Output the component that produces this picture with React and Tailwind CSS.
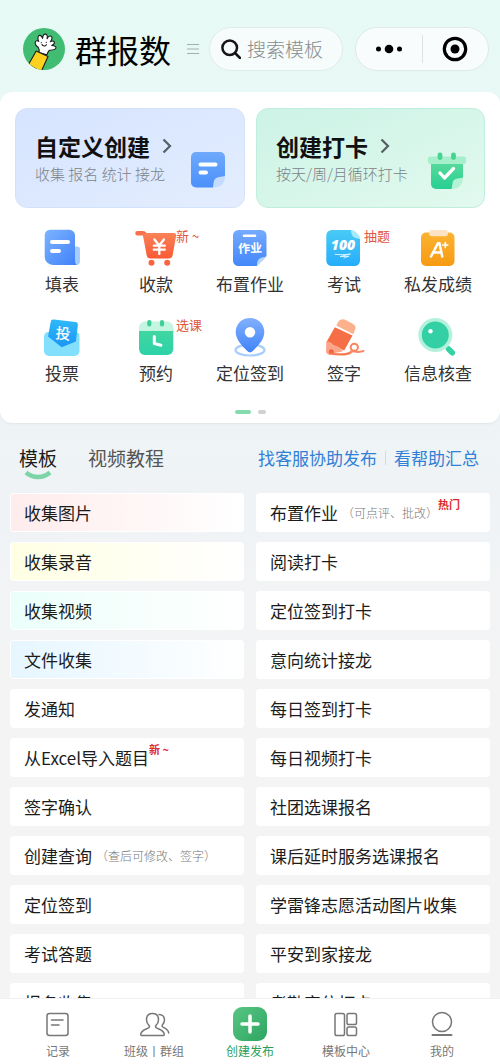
const FONT = "font-['Noto_Sans_CJK_SC','Noto_Sans',sans-serif]";

function Logo() {
  return (
    <svg viewBox="0 0 42 42" className="size-[42px] shrink-0" aria-hidden="true">
      <defs>
        <clipPath id="logoClip">
          <circle cx="21" cy="21" r="21" />
        </clipPath>
      </defs>
      <circle cx="21" cy="21" r="21" fill="#41bd73" />
      <g clipPath="url(#logoClip)" stroke="#1c1c1c" strokeWidth="1.1" strokeLinejoin="round" strokeLinecap="round">
        <path
          d="M16 24.5c.6-2 .3-3.300-.8-5.200-1.700-1-3.200-3-3-5 .3-1.800 2.300-2 3.600-.9-1.300-2.400-1.200-5.600.6-6 1.700-.4 2.600 1.200 3.200 3 .2-2.300 1.100-4.500 2.900-4.300 1.900.2 2 2.400 1.600 4.600 1-1.800 2.500-3.200 4-2.400 1.700 1 .8 3.200-.7 5.400 1.300-.8 3.200-1.100 3.900.3.700 1.500-1 2.700-2.600 3.500 1.800-.1 4.300.5 4.300 2.200-.1 2.200-4.200 2.300-6.800 2.600-1 1.200-1.800 2.700-2.400 4.500z"
          fill="#fff"
        />
        <path d="M13.200 23 25 28.400 18 44 5.500 36.500z" fill="#fdd11d" />
        <path d="M19 16.500c.8 1.800 3.300 2 4.400.2" fill="none" />
        <path d="M18.300 14.600v.1M23.300 14.300v.1" fill="none" />
      </g>
    </svg>
  );
}

function SheetIcon() {
  return (
    <svg viewBox="0 0 40 40" className="size-10" aria-hidden="true">
      <defs>
        <linearGradient id="sheetG" x1="0" y1="0" x2="1" y2="1">
          <stop stopColor="#7db4ff" />
          <stop offset="1" stopColor="#3f80f8" />
        </linearGradient>
      </defs>
      <path d="M27 18.500h8a3 3 0 0 1 3 3V33a4 4 0 0 1-4 4h-7z" fill="#a5ccff" />
      <path d="M8 1.800h19.500a5.500 5.500 0 0 1 5.500 5.500V32c0 2.500.8 4.300 2 5H11a8.300 8.300 0 0 1-8.300-8.300V7A5.300 5.300 0 0 1 8 1.800z" fill="url(#sheetG)" />
      <path d="M10 14h16M10 23h7" stroke="#fff" strokeWidth="4" strokeLinecap="round" />
    </svg>
  );
}

function CartIcon() {
  return (
    <svg viewBox="0 0 40 40" className="size-10 overflow-visible" aria-hidden="true">
      <defs>
        <linearGradient id="cartG" x1="0" y1="0" x2="0" y2="1">
          <stop stopColor="#f98258" />
          <stop offset="1" stopColor="#fa5a35" />
        </linearGradient>
      </defs>
      <path d="M1.500 5.300h5c1.800 0 2.400.8 2.800 2.500" stroke="#f9714a" strokeWidth="4.500" strokeLinecap="round" fill="none" />
      <path d="M6.500 5h31.200a2.400 2.400 0 0 1 2.400 2.900l-3.400 19a4.200 4.200 0 0 1-4.100 3.500H14.800a4.200 4.200 0 0 1-4.200-3.500z" fill="url(#cartG)" />
      <circle cx="15.500" cy="34.700" r="3" fill="#fa6440" />
      <circle cx="31.200" cy="34.700" r="3" fill="#fa6440" />
      <path d="m18.500 11.500 4.700 6 4.700-6M17.800 17.700h11M17.800 21.700h11M23.300 17.700v8.300" stroke="#fff" strokeWidth="2.300" fill="none" strokeLinecap="round" />
    </svg>
  );
}

function HomeworkIcon() {
  return (
    <svg viewBox="0 0 40 40" className="size-10" aria-hidden="true">
      <defs>
        <linearGradient id="hwG" x1="0" y1="0" x2="0" y2="1">
          <stop stopColor="#75aaff" />
          <stop offset="1" stopColor="#4387f9" />
        </linearGradient>
      </defs>
      <path d="M8.500 2H31a5.500 5.500 0 0 1 5.500 5.500V28l-10 10h-18A5.500 5.500 0 0 1 3 32.500v-25A5.500 5.500 0 0 1 8.500 2z" fill="url(#hwG)" />
      <path d="M36.500 28.500 27 38c0-3 .3-5 1.500-6.500 1.700-2 5-2.500 8-3z" fill="#b4d4ff" />
      <path d="M14 7.700h11" stroke="#fff" strokeWidth="2.600" strokeLinecap="round" />
      <text x="20" y="24.500" fontSize="12" fontWeight="700" fill="#fff" textAnchor="middle" transform="rotate(-2 20 20)">作业</text>
    </svg>
  );
}

function ExamIcon() {
  return (
    <svg viewBox="0 0 40 40" className="size-10" aria-hidden="true">
      <defs>
        <linearGradient id="examG" x1="0" y1="0" x2="0" y2="1">
          <stop stopColor="#49cbf5" />
          <stop offset="1" stopColor="#25adfb" />
        </linearGradient>
      </defs>
      <path d="M7.800 2H27l9 9v21.500a5.500 5.500 0 0 1-5.500 5.500H7.800a5.500 5.500 0 0 1-5.500-5.500v-25A5.500 5.500 0 0 1 7.800 2z" fill="url(#examG)" />
      <path d="M27 2c.2 3 .6 5 2 6.600 1.800 1.800 4.500 2 7 2.400 0-2-.8-3.600-2.300-5.200S30 2 27 2z" fill="#a8e9fc" />
      <text x="19" y="21.500" fontSize="14" fontWeight="800" fontStyle="italic" fill="#fff" textAnchor="middle" fontFamily="Open Sans, sans-serif">100</text>
      <path d="M11 26.300c6 .8 10 .3 15.500-.3-4 1-7 1.600-10.500 2.600 3 0 6-.3 9-.3-2.500.6-4 1-5 1.900" stroke="#d5f4ff" strokeWidth="1" fill="none" strokeLinecap="round" />
    </svg>
  );
}

function GradeIcon() {
  return (
    <svg viewBox="0 0 40 40" className="size-10" aria-hidden="true">
      <defs>
        <linearGradient id="gradeG" x1="0" y1="0" x2="0" y2="1">
          <stop stopColor="#fcb331" />
          <stop offset="1" stopColor="#f79a12" />
        </linearGradient>
      </defs>
      <rect x="3" y="4.500" width="33.500" height="33.500" rx="5" fill="url(#gradeG)" />
      <rect x="11" y="2" width="19" height="6.300" rx="3" fill="#fde3c4" />
      <path d="m13 28.500 7-13.300h1.500l2.700 13.300M16 24.500h7.500" stroke="#fff" strokeWidth="2.500" fill="none" strokeLinecap="round" strokeLinejoin="round" />
      <path d="M27.300 14.500v5M24.800 17h5" stroke="#fff" strokeWidth="1.700" strokeLinecap="round" />
    </svg>
  );
}

function VoteIcon() {
  return (
    <svg viewBox="0 0 40 40" className="size-10" aria-hidden="true">
      <defs>
        <linearGradient id="voteG" x1="0" y1="0" x2="0" y2="1">
          <stop stopColor="#2fb9f8" />
          <stop offset="1" stopColor="#1b95f7" />
        </linearGradient>
      </defs>
      <path d="M6 15h28a4 4 0 0 1 3.500 4v15a5 5 0 0 1-5 5H7a5 5 0 0 1-5-5V20a5 5 0 0 1 4-5z" fill="#83e0fc" />
      <path d="M11.800 2.600 33.500 5a2.700 2.700 0 0 1 2.400 3l-2 16.500-14.200 5.800L6 19.500 8.700 5a2.700 2.700 0 0 1 3.100-2.400z" fill="url(#voteG)" />
      <text x="21" y="22" fontSize="15" fontWeight="500" fill="#fff" textAnchor="middle" transform="rotate(6 20 16)">投</text>
    </svg>
  );
}

function BookingIcon() {
  return (
    <svg viewBox="0 0 40 40" className="size-10" aria-hidden="true">
      <defs>
        <linearGradient id="bookG" x1="0" y1="0" x2="0" y2="1">
          <stop stopColor="#43d6a0" />
          <stop offset="1" stopColor="#2bd3a8" />
        </linearGradient>
      </defs>
      <path d="M3 12h34.300v20a6 6 0 0 1-6 6H9a6 6 0 0 1-6-6z" fill="url(#bookG)" />
      <path d="M9 4.500h22.300a6 6 0 0 1 6 6V14H3v-3.500a6 6 0 0 1 6-6z" fill="#c4f5e1" />
      <path d="M13.300 5v2.500M26 5v2.500" stroke="#3ecf98" strokeWidth="4.200" strokeLinecap="round" />
      <path d="M18.300 19.500v7l6.700 1.700" stroke="#fff" strokeWidth="3" fill="none" strokeLinecap="round" strokeLinejoin="round" />
    </svg>
  );
}

function PinIcon() {
  return (
    <svg viewBox="0 0 40 40" className="size-10" aria-hidden="true">
      <defs>
        <linearGradient id="pinG" x1="0" y1="0" x2="0" y2="1">
          <stop stopColor="#82b0fd" />
          <stop offset="1" stopColor="#3f83f8" />
        </linearGradient>
      </defs>
      <ellipse cx="20" cy="33" rx="14.500" ry="5.500" fill="none" stroke="#a9cdfd" strokeWidth="2.200" />
      <path d="M20 1c8.200 0 14.300 6.200 14.300 14 0 7.500-6 13.500-11.800 19.300a3.400 3.400 0 0 1-5 0C11.700 28.500 5.700 22.500 5.700 15 5.700 7.200 11.800 1 20 1z" fill="url(#pinG)" />
      <circle cx="20" cy="15.300" r="5.200" fill="#fff" />
    </svg>
  );
}

function PencilIcon() {
  return (
    <svg viewBox="0 0 40 40" className="size-10 overflow-visible" aria-hidden="true">
      <path d="M14.300 4.800a4.800 4.800 0 0 1 6.300-2.200l8.200 4.200a4.800 4.800 0 0 1 2.200 6.200l-1.800 4.200L12.300 8.500z" fill="#fbb28c" />
      <path d="m10.800 10.200 17.700 8.300-8.300 15L2.500 25z" fill="#f66e46" />
      <path d="M2.300 24.500c4 .2 6.200 1.500 7.200 4.200 3.500-.3 6 .8 9.500 5.500L5.500 37.300A3 3 0 0 1 2 34.600z" fill="#fba58b" />
      <path d="M4.800 34a2.600 2.600 0 1 1 3 3.300L5 37.500z" fill="#f2623c" />
      <path d="M6 36.500c9 1.300 17 1.300 20.500-1" stroke="#f8774f" strokeWidth="2.200" fill="none" strokeLinecap="round" />
      <path d="M26.500 35.500c2-1 4-2.300 3.800-2M27.500 33.300c3 2.300 7 2 12 .7" stroke="#fa8a68" strokeWidth="2" fill="none" strokeLinecap="round" />
      <circle cx="30.300" cy="30.300" r="3.600" stroke="#fa8460" strokeWidth="2" fill="none" />
    </svg>
  );
}

function CheckInfoIcon() {
  return (
    <svg viewBox="0 0 40 40" className="size-10" aria-hidden="true">
      <path d="m30.500 32 3.800 3.800" stroke="#35d2a4" strokeWidth="5.500" strokeLinecap="round" />
      <circle cx="17.300" cy="18" r="17" fill="#b4f1dd" />
      <circle cx="17.300" cy="18" r="13.500" fill="#33cfa5" />
      <circle cx="12.500" cy="14.300" r="2.200" fill="#fff" />
    </svg>
  );
}

function NoteIcon() {
  return (
    <svg viewBox="0 0 36 36" className="size-9" aria-hidden="true">
      <defs>
        <linearGradient id="noteG" x1="0" y1="0" x2="0" y2="1">
          <stop stopColor="#6ea9fb" />
          <stop offset="1" stopColor="#4b90fa" />
        </linearGradient>
      </defs>
      <path d="M6 0h24a5 5 0 0 1 5 5v19L23 35.500H6a5 5 0 0 1-5-5V5a5 5 0 0 1 5-5z" fill="url(#noteG)" />
      <path d="M35 24c0 8-4.500 11.500-12 11.500.5-3 .3-6.500 2-8.500 2-2.200 6.500-2.200 10-3z" fill="#c3dcff" />
      <path d="M10.500 12.500h15M10.500 20.500h5.500" stroke="#fff" strokeWidth="4" strokeLinecap="round" />
    </svg>
  );
}

function ClockInIcon() {
  return (
    <svg viewBox="0 0 40 38" className="h-[38px] w-10" aria-hidden="true">
      <defs>
        <linearGradient id="clockG" x1="0" y1="0" x2="0" y2="1">
          <stop stopColor="#5bdb9b" />
          <stop offset="1" stopColor="#27cf93" />
        </linearGradient>
      </defs>
      <path d="M4 9h32v17.500L25.500 37H9a5 5 0 0 1-5-5z" fill="url(#clockG)" />
      <path d="M36 25.500c0 7-4 11.500-11.500 11.500 1-3 .5-7 2.500-9 2-1.700 5.500-1.500 9-2.500z" fill="#b5f2d5" />
      <rect x="1" y="4.500" width="38" height="7.500" rx="2" fill="#a5efcb" />
      <path d="M13 3v2.500M26.500 3v2.500" stroke="#45d38f" strokeWidth="4.800" strokeLinecap="round" />
      <path d="m13 21 4.500 5 9-9.500" stroke="#fff" strokeWidth="3.300" fill="none" strokeLinecap="round" strokeLinejoin="round" />
    </svg>
  );
}

const TOOLS = [
  { label: "填表", Icon: SheetIcon },
  { label: "收款", Icon: CartIcon, tag: "新 ~" },
  { label: "布置作业", Icon: HomeworkIcon },
  { label: "考试", Icon: ExamIcon, tag: "抽题" },
  { label: "私发成绩", Icon: GradeIcon },
  { label: "投票", Icon: VoteIcon },
  { label: "预约", Icon: BookingIcon, tag: "选课" },
  { label: "定位签到", Icon: PinIcon },
  { label: "签字", Icon: PencilIcon },
  { label: "信息核查", Icon: CheckInfoIcon },
];

const LEFT = [
  { name: "收集图片", bg: "from-[#ffecec]" },
  { name: "收集录音", bg: "from-[#ffffe3]" },
  { name: "收集视频", bg: "from-[#ebfffa]" },
  { name: "文件收集", bg: "from-[#e6f6ff]" },
  { name: "发通知" },
  { name: "从Excel导入题目", tag: "新 ~" },
  { name: "签字确认" },
  { name: "创建查询", note: "（查后可修改、签字）" },
  { name: "定位签到" },
  { name: "考试答题" },
  { name: "报名收集" },
];

const RIGHT = [
  { name: "布置作业", note: "（可点评、批改）", tag: "热门" },
  { name: "阅读打卡" },
  { name: "定位签到打卡" },
  { name: "意向统计接龙" },
  { name: "每日签到打卡" },
  { name: "每日视频打卡" },
  { name: "社团选课报名" },
  { name: "课后延时服务选课报名" },
  { name: "学雷锋志愿活动图片收集" },
  { name: "平安到家接龙" },
  { name: "考勤定位打卡" },
];

function Header() {
  return (
    <header className="flex items-center pt-[27px] pr-[11px] pb-[21px] pl-[23px]">
      <Logo />
      <h1 className="ml-2.5 text-[32px] leading-[44px] font-normal whitespace-nowrap text-black">群报数</h1>
      <button type="button" aria-label="菜单" className="ml-4 shrink-0">
        <svg viewBox="0 0 12 12" className="size-3" aria-hidden="true">
          <path d="M0 1.500h12M0 6h12M0 10.500h12" stroke="#a3b0ac" strokeWidth="1.200" />
        </svg>
      </button>
      <label className="ml-2.5 flex h-11 min-w-0 flex-1 items-center gap-1.5 rounded-full border border-[#dfece9] bg-[#f6fbfb] pl-[11px]">
        <svg viewBox="0 0 20 20" className="size-5 shrink-0" fill="none" stroke="#151515" strokeWidth="2.500" strokeLinecap="round" aria-hidden="true">
          <circle cx="8.700" cy="8.700" r="7.300" />
          <path d="m14 14 5 5" />
        </svg>
        <input
          type="search"
          aria-label="搜索模板"
          placeholder="搜索模板"
          className="w-full min-w-0 bg-transparent text-[19px] font-light outline-none placeholder:text-[#858c8b]"
        />
      </label>
      <div className="ml-3 flex h-11 w-[134px] shrink-0 items-center rounded-full border border-[#dfeae8] bg-[#f8fcfc]">
        <button type="button" aria-label="更多" className="flex flex-1 justify-center">
          <svg viewBox="0 0 28 10" className="h-2.5 w-7" aria-hidden="true">
            <circle cx="3.500" cy="5" r="2.500" />
            <circle cx="14" cy="5" r="4.300" />
            <circle cx="24.500" cy="5" r="2.500" />
          </svg>
        </button>
        <span className="h-7 w-px bg-[#dde3e3]" />
        <button type="button" aria-label="关闭" className="flex flex-1 justify-center">
          <svg viewBox="0 0 26 26" className="size-[26px]" aria-hidden="true">
            <circle cx="13" cy="13" r="10.700" fill="none" stroke="#000" strokeWidth="3.200" />
            <circle cx="13" cy="13" r="4.500" />
          </svg>
        </button>
      </div>
    </header>
  );
}

function CreateCard({ title, desc, className, children }) {
  return (
    <button type="button" className={`flex h-[100px] flex-1 items-start justify-between rounded-xl border pt-[23px] pl-[19px] text-left ${className}`}>
      <span className="flex flex-col">
        <span className="flex items-center gap-3 text-[23px] leading-7 font-bold whitespace-nowrap text-[#111]">
          {title}
          <svg viewBox="0 0 10 16" className="h-4 w-2.5" fill="none" stroke="#555f66" strokeWidth="2.200" aria-hidden="true">
            <path d="m1.500 1.500 6.500 6.500-6.500 6.500" />
          </svg>
        </span>
        <span className="mt-0.5 text-[15px] leading-6 font-light whitespace-nowrap text-[#7c8287]">{desc}</span>
      </span>
      <span className="mt-5">{children}</span>
    </button>
  );
}

function Tool({ label, Icon, tag }) {
  return (
    <button type="button" className="relative flex flex-col items-center">
      <Icon />
      <span className="mt-1 text-[17px] leading-6 whitespace-nowrap text-[#333]">{label}</span>
      {tag && (
        <span className="absolute top-0 left-[calc(50%+20px)] text-[13px] leading-4 whitespace-nowrap text-[#e0553d]">{tag}</span>
      )}
    </button>
  );
}

function TemplateRow({ name, note, tag, bg }) {
  return (
    <li>
      <a
        href="#"
        className={`flex h-[39px] items-center rounded-[3px] border border-white pl-[13px] whitespace-nowrap text-[17px] text-[#1c1c1c] ${bg ? `bg-linear-to-r ${bg} to-white` : "bg-white"}`}
      >
        {name}
        {note && <span className="ml-1 text-[12px] font-light text-[#777]">{note}</span>}
        {tag && <span className="self-start pt-0.5 text-[11px] leading-4 font-bold text-[#dd2a2a]">{tag}</span>}
      </a>
    </li>
  );
}

function BottomNav() {
  const item = "flex flex-1 flex-col items-center gap-0.5 text-[12px] leading-4 whitespace-nowrap";
  return (
    <nav className="flex h-[66px] shrink-0 border-t border-[#f0f0f0] bg-white px-2.5 pt-2 text-[#777]">
      <a href="#" className={item}>
        <svg viewBox="0 0 34 34" className="size-[34px]" fill="none" stroke="#777" strokeWidth="1.500" strokeLinecap="round" aria-hidden="true">
          <rect x="6" y="6.500" width="21" height="22" rx="2.500" />
          <path d="M10.500 13h11.500M10.500 18h7.500" />
        </svg>
        <span>记录</span>
      </a>
      <a href="#" className={item}>
        <svg viewBox="0 0 34 34" className="size-[34px]" fill="none" stroke="#777" strokeWidth="1.500" strokeLinecap="round" strokeLinejoin="round" aria-hidden="true">
          <path d="M15.500 6.500c-4 0-6 2.800-6 6.200 0 2.500 1 4.300 2.500 5.700.8.900.5 1.900-.5 2.500C8 22.800 4 23.500 3.700 27.500c0 .6.300.9.900.9h21.800c.6 0 .9-.3.900-.9-.3-4-4.300-4.700-7.800-6.600-1-.6-1.300-1.600-.5-2.500 1.500-1.400 2.500-3.200 2.500-5.700 0-3.400-2-6.200-6-6.200z" />
          <path d="M22 7.500c3.500 0 5.500 2.500 5.500 5.500 0 2.300-1 3.600-2 4.800-.7.900-.4 1.700.5 2.300 2.500 1.500 5.500 2.400 5.700 5.900" />
        </svg>
        <span>班级丨群组</span>
      </a>
      <a href="#" className={`${item} text-[#27a05c]`}>
        <span className="flex size-[34px] items-center justify-center rounded-[9px] bg-linear-to-br from-[#58c684] to-[#2ba560]">
          <svg viewBox="0 0 20 20" className="size-5" stroke="#fff" strokeWidth="3.500" strokeLinecap="round" aria-hidden="true">
            <path d="M10 2v16M2 10h16" />
          </svg>
        </span>
        <span>创建发布</span>
      </a>
      <a href="#" className={item}>
        <svg viewBox="0 0 34 34" className="size-[34px]" fill="none" stroke="#777" strokeWidth="1.500" aria-hidden="true">
          <rect x="6" y="6.500" width="9.500" height="22" rx="1.800" />
          <rect x="18" y="6.500" width="9.500" height="11" rx="1.800" />
          <rect x="18" y="20" width="9.500" height="8.500" rx="1.800" />
        </svg>
        <span>模板中心</span>
      </a>
      <a href="#" className={item}>
        <svg viewBox="0 0 34 34" className="size-[34px]" fill="none" stroke="#777" strokeWidth="1.500" strokeLinecap="round" aria-hidden="true">
          <circle cx="17" cy="15" r="9.500" />
          <path d="M7.500 28h19" strokeWidth="2" />
        </svg>
        <span>我的</span>
      </a>
    </nav>
  );
}

export default function App() {
  return (
    <div className={`flex h-dvh flex-col overflow-hidden bg-linear-to-b from-[#e7faf5] via-[#eff3f6] via-45% to-[#f4f4f4] to-65% ${FONT}`}>
      <main className="min-h-0 flex-1 overflow-y-auto [scrollbar-width:none]">
        <Header />

        <section className="rounded-xl bg-white px-[15px] pt-4 pb-[9px] shadow-sm shadow-black/5">
          <div className="flex gap-[11px]">
            <CreateCard title="自定义创建" desc="收集 报名 统计 接龙" className="border-[#d3e2fb] bg-linear-to-br from-[#d6e4ff] to-[#e3edfe] pr-[18px]">
              <NoteIcon />
            </CreateCard>
            <CreateCard title="创建打卡" desc="按天/周/月循环打卡" className="border-[#bfeedd] bg-linear-to-br from-[#ccf3e6] to-[#e2f9ee] pr-[17px]">
              <ClockInIcon />
            </CreateCard>
          </div>

          <div className="mt-5 grid grid-cols-5 gap-y-[21px]">
            {TOOLS.map((tool) => (
              <Tool key={tool.label} {...tool} />
            ))}
          </div>

          {/* Pager */}
          <div className="mt-[25px] flex justify-center gap-[7px]">
            <span className="h-1 w-4 rounded-full bg-[#86dbae]" />
            <span className="h-1 w-2 rounded-full bg-[#d0d0d0]" />
          </div>
        </section>

        <div className="flex h-[70px] items-center justify-between pr-[21px] pl-[19px]">
          <div className="flex gap-[31px] text-[19px] leading-7">
            <button type="button" className="relative text-[#1c1c1c]">
              模板
              <svg viewBox="0 0 28 10" className="absolute top-[26px] left-[5px] h-2.5 w-7" aria-hidden="true">
                <path d="M2 2.500c7 6 17 6 24 0" stroke="#7dd4a6" strokeWidth="4.500" fill="none" />
              </svg>
            </button>
            <button type="button" className="text-[#555]">视频教程</button>
          </div>
          <div className="flex items-center text-[17px] text-[#3180d5]">
            <a href="#">找客服协助发布</a>
            <span className="mx-2 h-3.5 w-px bg-[#d5dade]" />
            <a href="#">看帮助汇总</a>
          </div>
        </div>

        <div className="grid grid-cols-2 gap-3 px-2.5">
          <ul className="flex flex-col gap-2.5">
            {LEFT.map((row) => (
              <TemplateRow key={row.name} {...row} />
            ))}
          </ul>
          <ul className="flex flex-col gap-2.5">
            {RIGHT.map((row) => (
              <TemplateRow key={row.name} {...row} />
            ))}
          </ul>
        </div>
      </main>
      <BottomNav />
    </div>
  );
}
